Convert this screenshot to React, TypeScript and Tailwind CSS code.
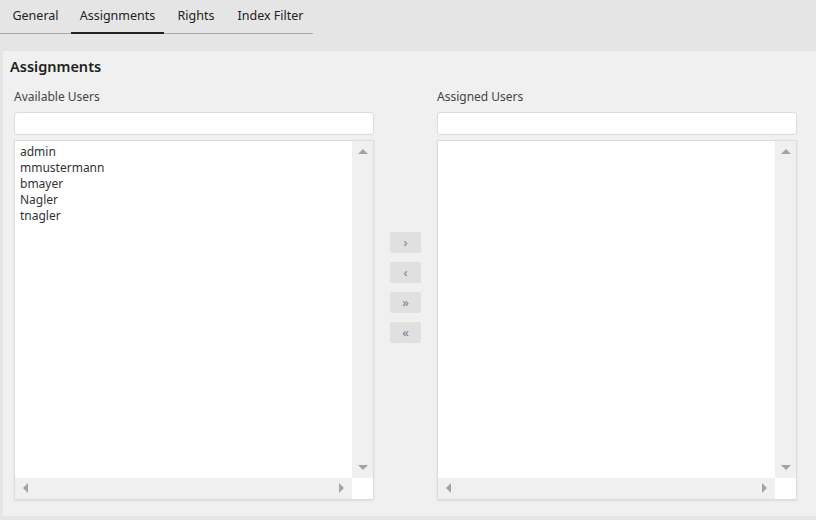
import React from "react";

function ListBox({ items }: { items: string[] }) {
  return (
    <div className="h-[360px] border border-[#dcdcdc] bg-white flex flex-col shadow-[0_1px_2px_rgba(0,0,0,0.08)]">
      <div className="flex flex-1 min-h-0">
        <div className="flex-1 px-[5px] pt-[3px] text-[12px] leading-[16px] text-[#333]">
          {items.map((i) => (
            <div key={i}>{i}</div>
          ))}
        </div>
        <div className="w-[21px] bg-[#f0f0f0] flex flex-col items-center justify-between py-[8px]">
          <div className="w-0 h-0 border-x-[5px] border-x-transparent border-b-[5px] border-b-[#a3a3a3]" />
          <div className="w-0 h-0 border-x-[5px] border-x-transparent border-t-[5px] border-t-[#a3a3a3]" />
        </div>
      </div>
      <div className="flex h-[21px]">
        <div className="flex-1 bg-[#f0f0f0] flex items-center justify-between px-[8px]">
          <div className="w-0 h-0 border-y-[5px] border-y-transparent border-r-[5px] border-r-[#a3a3a3]" />
          <div className="w-0 h-0 border-y-[5px] border-y-transparent border-l-[5px] border-l-[#a3a3a3]" />
        </div>
        <div className="w-[21px] bg-white" />
      </div>
    </div>
  );
}

function Column({ label, items }: { label: string; items: string[] }) {
  return (
    <div className="w-[360px] flex flex-col">
      <div className="text-[12px] text-[#444] h-[20px] leading-[20px]">{label}</div>
      <div className="mt-[5px] h-[23px] bg-white border border-[#dcdcdc] rounded-[3px]" />
      <div className="mt-[5px]">
        <ListBox items={items} />
      </div>
    </div>
  );
}

const Btn = ({ c }: { c: string }) => (
  <div className="w-[31px] h-[21px] bg-[#e0e0e0] rounded-[2px] flex items-center justify-center text-[#6d7f99] text-[13px] leading-none">
    {c}
  </div>
);

export default function App() {
  return (
    <div className="w-[816px] h-[520px] bg-[#e5e5e5] font-['Open_Sans',sans-serif] overflow-hidden">
      <div className="flex w-[313px] border-b border-[#a8a8a8] h-[34px] pt-[7px] text-[12.5px] text-[#222]">
        {["General", "Assignments", "Rights", "Index Filter"].map((t, i) => (
          <div
            key={t}
            className={
              "h-[27px] flex items-start justify-center " +
              (i === 0 ? "w-[71px] pl-[0px]" : i === 1 ? "w-[93px] border-b-[2px] border-[#222]" : i === 2 ? "w-[64px]" : "w-[85px]")
            }
          >
            {t}
          </div>
        ))}
      </div>
      <div className="ml-[3px] mt-[17px] h-[465px] bg-[#f0f0f0] pt-[5px] px-[7px]">
        <div className="text-[14.5px] font-semibold text-[#222]">Assignments</div>
        <div className="flex mt-[9px] px-[4px]">
          <Column label="Available Users" items={["admin", "mmustermann", "bmayer", "Nagler", "tnagler"]} />
          <div className="w-[63px] flex flex-col items-center gap-[9px] pt-[145px]">
            <Btn c="›" />
            <Btn c="‹" />
            <Btn c="»" />
            <Btn c="«" />
          </div>
          <Column label="Assigned Users" items={[]} />
        </div>
      </div>
    </div>
  );
}
